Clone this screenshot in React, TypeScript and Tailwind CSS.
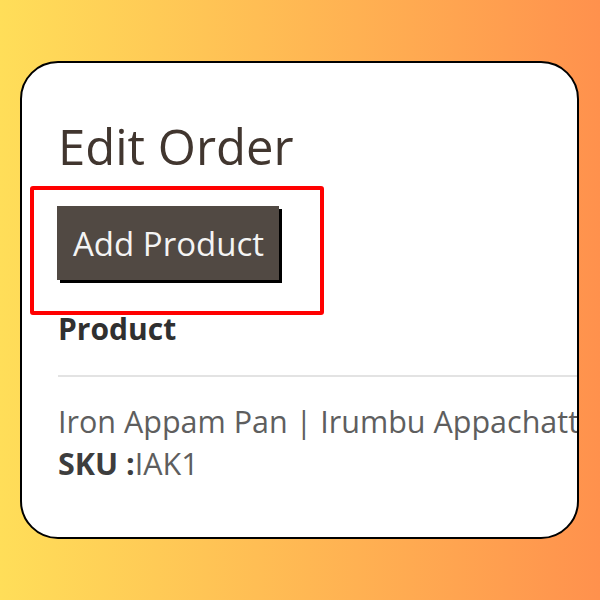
export default function App() {
  return (
    <div
      className="w-[600px] h-[600px] bg-gradient-to-r from-[#ffde59] to-[#ff914d] pt-[61px] pl-[20px]"
      style={{ fontFamily: '"Open Sans", "Liberation Sans", sans-serif' }}
    >
      {/* Page card */}
      <div className="w-[559px] h-[478px] bg-white border-2 border-black rounded-[38px] overflow-hidden pl-[36px] whitespace-nowrap">
        <h1 className="mt-[59px] text-[49px] leading-none text-[#41362f] font-normal">Edit Order</h1>

        {/* highlighted action */}
        <div className="-ml-[28px] mt-[15px] w-[294px] h-[129px] border-4 border-[#ff0000] rounded-[3px] pl-[23px] pt-[16px]">
          <button className="w-[222px] h-[74px] bg-[#514943] shadow-[3px_3px_0_#000] flex items-center pl-[16px] text-[33px] leading-none font-medium text-[#f4f4f4]">
            Add Product
          </button>
        </div>

        <div className="-mt-[1px] text-[30px] leading-none font-bold text-[#303030]">Product</div>
        <div className="mt-[31px] h-[2px] w-[600px] bg-[#e3e3e3]" />

        <div className="mt-[23px] text-[30.5px] leading-[42px] text-[#5e5e5e]">
          <div>Iron Appam Pan | Irumbu Appachatti with Wooden Handle</div>
          <div>
            <span className="font-bold text-[#3d3d3d]">SKU :</span>IAK1
          </div>
        </div>

        <div className="mt-[49px] text-[30px] leading-[42px] text-[#8a8a8a]">
          Traditional cast iron appam kadai, pre-seasoned
        </div>
      </div>
    </div>
  );
}
